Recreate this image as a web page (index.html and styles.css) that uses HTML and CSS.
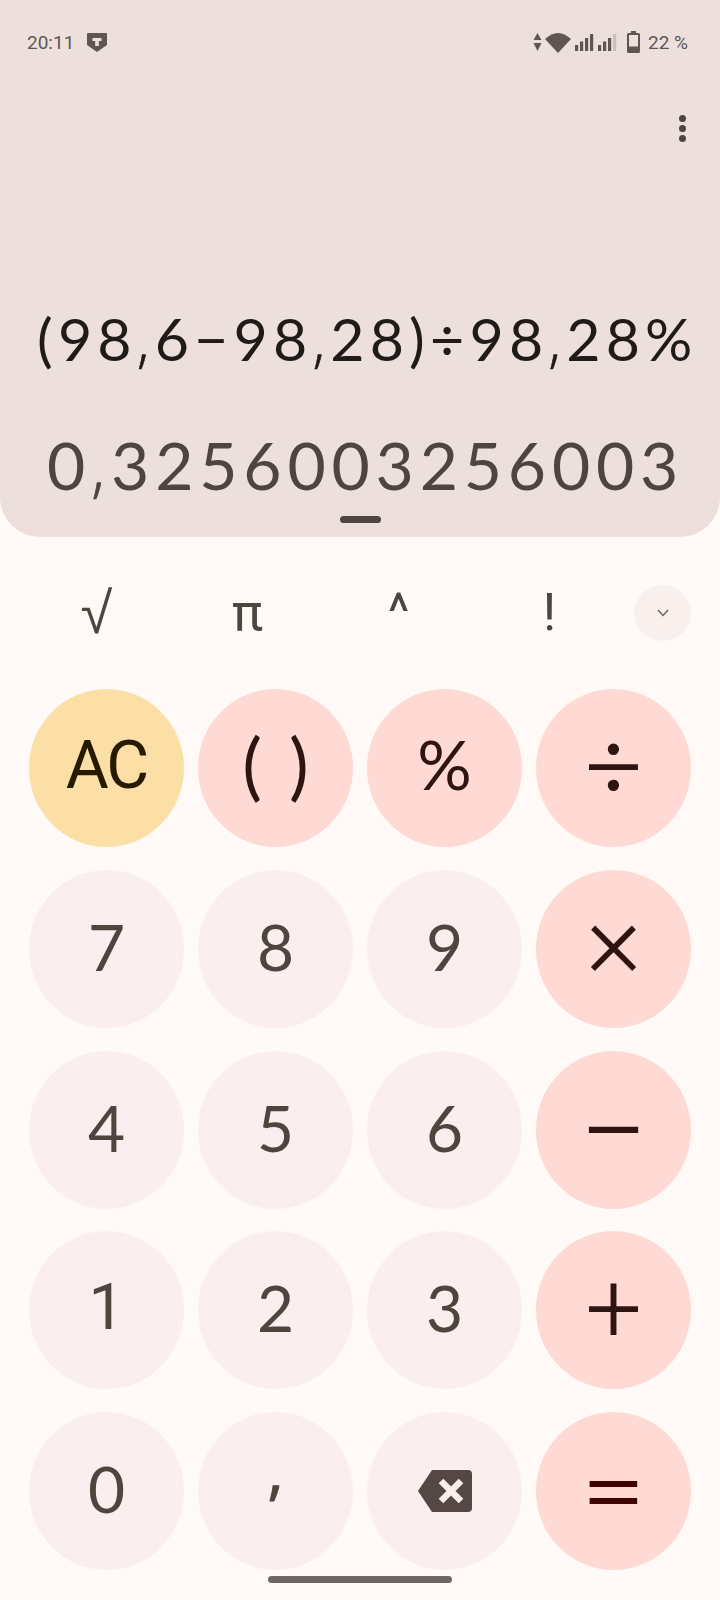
FILE: index.html
```html
<!DOCTYPE html>
<html lang="en">
<head>
<meta charset="utf-8">
<title>Calculator</title>
<link rel="stylesheet" href="styles.css">
</head>
<body>
<div class="app">
  <section class="panel">
    <div class="status">
      <div class="status-left">
        <span class="time">20:11</span>
        <svg class="shield" viewBox="0 0 20 19"><path d="M0 1Q0 0 1 0H19Q20 0 20 1V12L10 19L0 12Z" fill="#5f5654"/><path d="M5.500 5H14.500V8H11.800V13H8.200V8H5.500Z" fill="#ede0dc"/></svg>
      </div>
      <div class="status-right">
        <svg class="arrows" viewBox="0 0 9 18"><path d="M4.500 0L8.500 7H.5ZM.5 10H8.500L4.500 18Z" fill="#5f5654"/></svg>
        <svg class="wifi" viewBox="0 0 26 21"><path d="M0 7Q13-5 26 7L13 21Z" fill="#5f5654"/></svg>
        <svg class="signal" viewBox="0 0 20 17"><g fill="#5f5654"><rect x="0" y="11" width="3.200" height="6"/><rect x="5" y="7.500" width="3.200" height="9.500"/><rect x="10" y="4" width="3.200" height="13"/><rect x="15" y="0" width="3.200" height="17"/></g></svg>
        <svg class="signal" viewBox="0 0 20 17"><g fill="#5f5654"><rect x="0" y="11" width="3.200" height="6"/><rect x="5" y="7.500" width="3.200" height="9.500"/><rect x="10" y="4" width="3.200" height="13"/></g><rect x="15" y="0" width="3.200" height="17" fill="#c9bfbc"/></svg>
        <svg class="battery" viewBox="0 0 13 22"><path d="M4 0H9V2H11.500Q13 2 13 3.500V20.500Q13 22 11.500 22H1.500Q0 22 0 20.500V3.500Q0 2 1.500 2H4Z" fill="#5f5654"/><rect x="2" y="4" width="9" height="11.500" fill="#ede0dc"/></svg>
        <span class="percent">22 %</span>
      </div>
    </div>
    <div class="menu-row">
      <div class="menu"><i></i><i></i><i></i></div>
    </div>
    <div class="expression">(98<span class="c">,</span>6−98<span class="c">,</span>28)÷98<span class="c">,</span>28%</div>
    <div class="result">0<span class="c">,</span>3256003256003</div>
    <div class="handle"></div>
  </section>
  <section class="sci">
    <span class="sci-key sqrt">√</span>
    <span class="sci-key">π</span>
    <span class="sci-key">^</span>
    <span class="sci-key">!</span>
    <span class="sci-toggle"><svg viewBox="0 0 12 8"><path d="M1 1L6 6.500L11 1" fill="none" stroke="#6b5f5c" stroke-width="1.400"/></svg></span>
  </section>
  <section class="keys">
    <button class="key clear">AC</button>
    <button class="key op paren">( )</button>
    <button class="key op percent-key">%</button>
    <button class="key op sym">÷</button>
    <button class="key">7</button>
    <button class="key">8</button>
    <button class="key">9</button>
    <button class="key op sym">×</button>
    <button class="key">4</button>
    <button class="key">5</button>
    <button class="key">6</button>
    <button class="key op sym minus">−</button>
    <button class="key one">1</button>
    <button class="key">2</button>
    <button class="key">3</button>
    <button class="key op sym">+</button>
    <button class="key">0</button>
    <button class="key comma">,</button>
    <button class="key back-key" aria-label="Backspace"><svg class="back" viewBox="0 0 54 42"><path d="M14 0H50Q54 0 54 4V38Q54 42 50 42H14L0 21Z" fill="#554744"/><path d="M23 11L43 31M43 11L23 31" stroke="#faeeec" stroke-width="6.500"/></svg></button>
    <button class="key op sym eq">=</button>
  </section>
  <div class="home"></div>
</div>
</body>
</html>
```
FILE: styles.css
```css
* { box-sizing: border-box; }
html, body { margin: 0; padding: 0; }
body { background: #fffaf7; font-family: "Lato", "Noto Sans", sans-serif; }
.app { width: 720px; height: 1600px; display: flex; flex-direction: column; overflow: hidden; }

.panel { height: 537px; background: #ede0dc; border-radius: 0 0 40px 40px; display: flex; flex-direction: column; }
.status { height: 84px; padding: 0 32px 0 27px; display: flex; justify-content: space-between; align-items: center; font-family: "Roboto", sans-serif; font-size: 19px; color: #5f5654; }
.status-left, .status-right { display: flex; align-items: center; }
.shield { width: 20px; height: 19px; margin-left: 13px; }
.arrows { width: 9px; height: 18px; }
.wifi { width: 26px; height: 21px; margin-left: 3px; }
.signal { width: 20px; height: 17px; margin-left: 4px; }
.signal + .signal { margin-left: 3px; }
.battery { width: 13px; height: 22px; margin-left: 9px; }
.percent { margin-left: 8px; }

.menu-row { height: 76px; padding: 31px 34px 0 0; display: flex; justify-content: flex-end; }
.menu { display: flex; flex-direction: column; gap: 3px; }
.menu i { width: 7px; height: 7px; border-radius: 50%; background: #50443f; }

.c { font-family: "Open Sans", sans-serif; font-weight: 300; -webkit-text-stroke: 0.6px currentColor; }
.expression { margin-top: 143px; height: 70px; padding-left: 37px; font-size: 59px; line-height: 70px; letter-spacing: 5.2px; color: #201a18; white-space: nowrap; }
.result { margin-top: 51px; height: 80px; padding-left: 47px; font-size: 66px; line-height: 80px; letter-spacing: 5.8px; color: #50443f; white-space: nowrap; }
.handle { width: 41px; height: 7px; margin: 12px auto 0; border-radius: 4px; background: #50443f; }

.sci { height: 152px; padding: 48px 29px 0 21px; display: flex; align-items: flex-start; }
.sci-key { width: 151px; text-align: center; font-family: "Roboto", sans-serif; font-size: 52px; line-height: 56px; color: #50443f; }
.sqrt { font-family: "Liberation Sans", sans-serif; font-size: 58px; }
.sci-toggle { width: 57px; height: 56px; margin-left: 9px; border-radius: 50%; background: #f9f0ee; display: flex; align-items: center; justify-content: center; }
.sci-toggle svg { width: 12px; height: 8px; }

.keys { padding: 0 29px; display: grid; grid-template-columns: repeat(4, 155px); grid-auto-rows: 158px; column-gap: 14px; row-gap: 22.75px; }
.key { border: 0; padding: 0 0 5px; border-radius: 50%; background: #fbeeee; color: #50443f; font-family: inherit; font-size: 64px; display: flex; align-items: center; justify-content: center; }
.op { background: #ffd9d4; color: #2f1512; }
.clear { background: #fbdfa6; color: #261a00; font-family: "Roboto", sans-serif; font-size: 66px; letter-spacing: -2px; }
.sym { font-size: 100px; font-weight: 300; padding-bottom: 12px; -webkit-text-stroke: 2px currentColor; }
.minus { font-size: 114px; }
.paren { font-size: 74px; word-spacing: 8px; padding-bottom: 9px; }
.percent-key { font-size: 68px; padding-bottom: 9px; }
.one { font-family: "Roboto", sans-serif; }
.comma { font-family: "Open Sans", sans-serif; padding-bottom: 44px; font-size: 62px; -webkit-text-stroke: 1px currentColor; }
.back-key { padding: 0; }
.eq { color: #410002; font-size: 110px; padding-bottom: 8px; }
.back { width: 54px; height: 42px; }

.home { width: 184px; height: 7px; margin: 6px auto 0; border-radius: 4px; background: #6d6866; }
```
